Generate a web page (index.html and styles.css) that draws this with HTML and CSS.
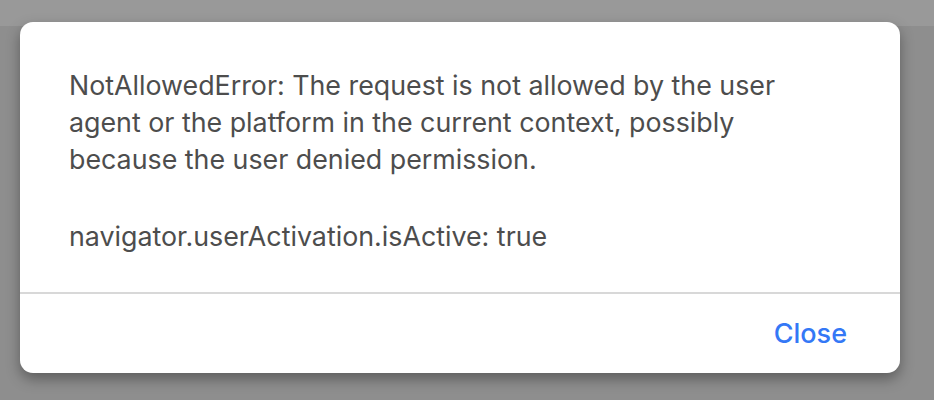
FILE: index.html
```html
<!DOCTYPE html>
<html>
<head>
<meta charset="utf-8">
<link rel="stylesheet" href="styles.css">
</head>
<body>
<div class="topbar"></div>
<div class="overlay">
  <div class="dialog">
    <div class="body">
      <p class="msg">NotAllowedError: The request is not allowed by the user agent or the platform in the current context, possibly because the user denied permission.</p>
      <p class="msg">navigator.userActivation.isActive: true</p>
    </div>
    <div class="footer">
      <button class="close">Close</button>
    </div>
  </div>
</div>
</body>
</html>
```
FILE: styles.css
```css
html, body {
  margin: 0;
  height: 100%;
}
body {
  background: #8e8e8e;
  font-family: Inter, "Noto Sans", sans-serif;
  position: relative;
  overflow: hidden;
}
.topbar {
  height: 26px;
  background: #999999;
}
.overlay {
  position: absolute;
  inset: 0;
  padding: 22px 34px 0 20px;
}
.dialog {
  width: 880px;
  height: 351px;
  background: #fff;
  border-radius: 13px;
  box-shadow: 0 6px 14px rgba(0,0,0,0.35);
  display: flex;
  flex-direction: column;
  overflow: hidden;
}
.body {
  padding: 45px 90px 0 49px;
  border-bottom: 2px solid #d8d8d8;
  box-sizing: border-box;
  height: 272px;
}
.msg {
  margin: 0 0 40px;
  font-size: 26.8px;
  line-height: 37px;
  color: #4d4d4d;
}
.footer {
  flex: 1;
  display: flex;
  align-items: center;
  justify-content: flex-end;
  padding-right: 53px;
}
.close {
  background: none;
  border: none;
  padding: 0;
  font-family: Inter, "Noto Sans", sans-serif;
  font-size: 27px;
  font-weight: 500;
  color: #3478f6;
}
```
